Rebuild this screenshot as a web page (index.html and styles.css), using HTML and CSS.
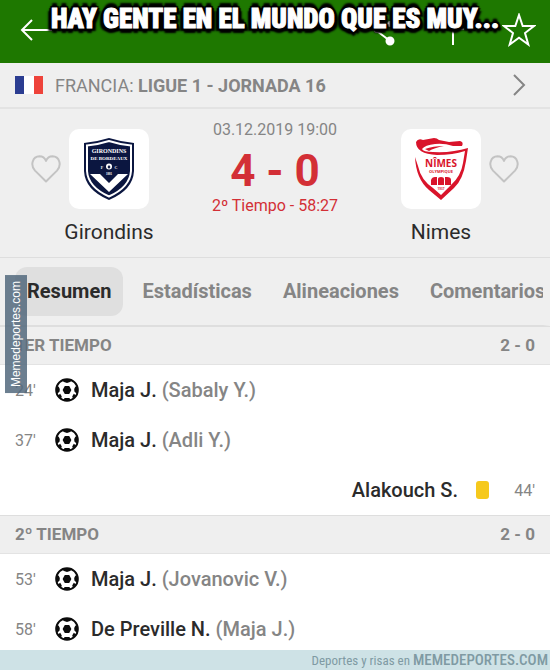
FILE: index.html
```html
<!DOCTYPE html>
<html lang="es">
<head>
  <meta charset="UTF-8">
  <meta name="viewport" content="width=device-width, initial-scale=1">
  <title>Girondins 4 - 0 Nimes</title>
  <link rel="stylesheet" href="styles.css">
</head>
<body>

<!-- Shared icons -->
<svg class="sprite" aria-hidden="true">
  <symbol id="ball" viewBox="0 0 24 24">
    <circle cx="12" cy="12" r="10.800" fill="#fff" stroke="#0b0b0b" stroke-width="2"/>
    <path fill="#0b0b0b" d="M6 2 H18 L15 4 L12 5 L9 4 Z M1 9 L3.600 8.500 L4.800 11 L4.600 13.500 L2.500 15.500 L1 14.500 Z M23 9 L20.400 8.500 L19.200 11 L19.400 13.500 L21.500 15.500 L23 14.500 Z M3 17.500 L5.200 15.800 L6.800 18.600 L6 20.500 Z M21 17.500 L18.800 15.800 L17.200 18.600 L18 20.500 Z M8.500 22.500 L9.500 20 H14.500 L15.500 22.500 Z"/>
    <path fill="#0b0b0b" d="M9.800 8 H14.200 L16.400 12 L14.200 16 H9.800 L7.600 12 Z"/>
  </symbol>
  <symbol id="heart" viewBox="0 0 30 28">
    <path fill="none" stroke="#c3c3c3" stroke-width="2" stroke-linejoin="round" d="M15 26.500 L4 15.600 C-1 10 1.500 1.500 8.500 1.300 C12 1.300 14 3.500 15 6 C16 3.500 18 1.300 21.500 1.300 C28.500 1.500 31 10 26 15.600 Z"/>
  </symbol>
</svg>

<header class="topbar">
  <button class="icon-btn" aria-label="Volver">
    <svg width="32" height="24" viewBox="0 0 32 24"><path d="M32 12 H2 M12 2 L2 12 L12 22"/></svg>
  </button>
  <div class="actions">
    <button class="icon-btn" aria-label="Compartir">
      <svg width="28" height="32" viewBox="0 0 28 32"><path d="M5 17 L18 9 M5 17 L18 27"/><circle cx="5" cy="16" r="2"/><circle cx="18" cy="10" r="2"/><circle cx="18" cy="27" r="3.500"/></svg>
    </button>
    <button class="icon-btn" aria-label="Añadir">
      <svg width="32" height="32" viewBox="0 0 32 32"><path d="M18 5 V31 M7 15 H29"/></svg>
    </button>
    <button class="icon-btn" aria-label="Favorito">
      <svg width="34" height="34" viewBox="0 0 34 34"><path d="M17 2 L20.700 13 H32 L23 20 L26.300 31.500 L17 24.700 L7.700 31.500 L11 20 L2 13 H13.300 Z"/></svg>
    </button>
  </div>
  <h1 class="caption">HAY GENTE EN EL MUNDO QUE ES MUY...</h1>
</header>

<a class="league" href="#">
  <span class="flag"></span>
  <span class="league-name">FRANCIA: <strong>LIGUE 1 - JORNADA 16</strong></span>
  <svg width="14" height="22" viewBox="0 0 14 22"><path d="M2 1 L12 11 L2 21"/></svg>
</a>

<section class="match">
  <div class="team">
    <button class="heart" aria-label="Seguir a Girondins"><svg width="30" height="28"><use href="#heart"/></svg></button>
    <div class="team-main">
      <div class="logo">
        <svg width="80" height="80" viewBox="0 0 80 80">
          <path fill="#0b1640" d="M15 14 Q27 13 40 9 Q53 13 65 14 V42 Q64 61 40 71 Q16 61 15 42 Z"/>
          <path fill="none" stroke="#fff" stroke-width="2" d="M18 16.500 Q29 15.500 40 12 Q51 15.500 62 16.500 V42 Q61 58 40 67.500 Q19 58 18 42 Z"/>
          <path fill="#fff" d="M21 45 H31 L40 54 L49 45 H59 L40 63 Z"/>
          <g fill="#fff" text-anchor="middle" font-family="Liberation Serif, serif" font-weight="bold">
            <text x="40" y="24" font-size="6">GIRONDINS</text>
            <text x="40" y="31" font-size="5">DE BORDEAUX</text>
            <text x="33" y="40" font-size="4">F</text>
            <text x="47" y="40" font-size="4">C</text>
            <text x="40" y="46" font-size="3">1881</text>
          </g>
          <circle cx="40" cy="37.500" r="3" fill="#fff"/>
          <path fill="#0b1640" d="M40 36 L41.500 38 L40.500 39.500 H39.500 L38.500 38 Z"/>
        </svg>
      </div>
      <h2>Girondins</h2>
    </div>
  </div>

  <div class="result">
    <time datetime="2019-12-03T19:00">03.12.2019 19:00</time>
    <p class="score">4 - 0</p>
    <p class="clock">2º Tiempo - 58:27</p>
  </div>

  <div class="team">
    <div class="team-main">
      <div class="logo">
        <svg width="80" height="80" viewBox="0 0 80 80">
          <g fill="#d9142b">
            <path d="M15 13 Q17 9 22 11 L33 9 Q36 9 38 11 L48 13 L59 12 Q63 13 61 17 L52 17 Q43 14 34 15 Q24 16 21 20 Q22 23 32 23 Q51 24 67 19 L65 32 Q62 51 53 59 L40 71 L28 61 Q15 50 14 28 L17 37 Q20 51 32 59 L40 66 L50 56 Q60 47 62 34 L64 22 Q52 26 36 26 Q15 25 15 13 Z"/>
            <path d="M24 20 Q32 17 43 17 Q33 19 28 22 Z"/>
            <path d="M30 56 V51 Q31 48 34 48 H36 V56 Z M37 56 V50 Q37 48 40 48 Q43 48 43 50 V56 Z M44 56 V48 H46 Q50 48 50 51 V56 Z"/>
          </g>
          <g fill="#d9142b" text-anchor="middle" font-weight="bold" font-family="Open Sans, sans-serif">
            <text x="40" y="38" font-size="10">NÎMES</text>
            <text x="40" y="44" font-size="4">OLYMPIQUE</text>
            <text x="40" y="61" font-size="3">1937</text>
          </g>
        </svg>
      </div>
      <h2>Nimes</h2>
    </div>
    <button class="heart" aria-label="Seguir a Nimes"><svg width="30" height="28"><use href="#heart"/></svg></button>
  </div>
</section>

<nav class="tabs">
  <a class="tab active" href="#">Resumen</a>
  <a class="tab" href="#">Estadísticas</a>
  <a class="tab" href="#">Alineaciones</a>
  <a class="tab" href="#">Comentarios</a>
</nav>

<main>
  <h3 class="period"><span>1ER TIEMPO</span><span>2 - 0</span></h3>
  <ul class="events">
    <li class="event"><span class="minute">24'</span><svg width="24" height="24"><use href="#ball"/></svg><span class="player">Maja J. <small>(Sabaly Y.)</small></span></li>
    <li class="event"><span class="minute">37'</span><svg width="24" height="24"><use href="#ball"/></svg><span class="player">Maja J. <small>(Adli Y.)</small></span></li>
    <li class="event away"><span class="minute">44'</span><span class="card"></span><span class="player">Alakouch S.</span></li>
  </ul>
  <h3 class="period"><span>2º TIEMPO</span><span>2 - 0</span></h3>
  <ul class="events">
    <li class="event"><span class="minute">53'</span><svg width="24" height="24"><use href="#ball"/></svg><span class="player">Maja J. <small>(Jovanovic V.)</small></span></li>
    <li class="event"><span class="minute">58'</span><svg width="24" height="24"><use href="#ball"/></svg><span class="player">De Preville N. <small>(Maja J.)</small></span></li>
  </ul>
</main>

<div class="watermark">Memedeportes.com</div>
<footer class="credit">Deportes y risas en <strong>MEMEDEPORTES.COM</strong></footer>

</body>
</html>
```
FILE: styles.css
```css
* {
  box-sizing: border-box;
}

body {
  margin: 0;
  font-family: Roboto, "Liberation Sans", sans-serif;
  color: #2b2b2b;
  background: #fff;
}

h1, h2, h3, p, ul {
  margin: 0;
  padding: 0;
}

a {
  color: inherit;
  text-decoration: none;
}

button {
  display: flex;
  padding: 0;
  border: 0;
  background: none;
}

.sprite {
  position: absolute;
  width: 0;
  height: 0;
}

/* top bar */
.topbar {
  position: relative;
  display: flex;
  justify-content: space-between;
  align-items: center;
  height: 63px;
  padding: 0 14px 4px 20px;
  background: #1e7800;
}

.actions {
  display: flex;
  align-items: center;
  gap: 35px;
}

.icon-btn svg {
  fill: none;
  stroke: #fff;
  stroke-width: 2;
}

.icon-btn circle {
  fill: #fff;
}

.caption {
  position: absolute;
  top: 0;
  left: 0;
  right: 0;
  text-align: center;
  font: 900 27px/38px "Roboto Condensed", Roboto, sans-serif;
  white-space: nowrap;
  color: #fff;
  -webkit-text-stroke: 1px #fff;
  text-shadow:
    3px 0 1px #000, -3px 0 1px #000, 0 3px 1px #000, 0 -3px 1px #000,
    2px 2px 1px #000, -2px 2px 1px #000, 2px -2px 1px #000, -2px -2px 1px #000,
    0 5px 2px #000, 0 -5px 2px #000, 4px 3px 2px #000, -4px 3px 2px #000;
}

/* league */
.league {
  display: flex;
  align-items: center;
  gap: 12px;
  height: 46px;
  padding: 0 24px 0 15px;
  border-bottom: 2px solid #e3e3e3;
  background: #efefef;
  color: #858585;
  font-size: 18px;
}

.league-name {
  flex: 1;
}

.league svg {
  fill: none;
  stroke: #858585;
  stroke-width: 2;
}

.flag {
  width: 28px;
  height: 18px;
  background: linear-gradient(90deg, #2b3d91 33%, #fff 33% 67%, #ee433b 67%);
}

/* match */
.match {
  display: flex;
  justify-content: space-between;
  padding: 10px 31px 12px;
  border-bottom: 1px solid #dedede;
  background: #efefef;
}

.team {
  display: flex;
  align-items: flex-start;
  gap: 4px;
  padding-top: 10px;
}

.heart {
  padding-top: 26px;
}

.team-main {
  display: flex;
  flex-direction: column;
  align-items: center;
  gap: 10px;
  width: 88px;
}

.logo {
  width: 80px;
  height: 80px;
  border-radius: 10px;
  background: #fff;
}

h2 {
  font-size: 21px;
  line-height: 26px;
  font-weight: normal;
}

.result {
  text-align: center;
  color: #d32f36;
}

.result time {
  display: block;
  color: #858585;
  font-size: 16px;
  line-height: 22px;
}

.score {
  padding-top: 4px;
  font-size: 44px;
  line-height: 52px;
  font-weight: bold;
}

.clock {
  font-size: 16px;
  line-height: 18px;
}

/* tabs */
.tabs {
  display: flex;
  gap: 7px;
  padding: 9px 0 9px 15px;
  border-right: 7px solid #efefef;
  border-bottom: 1px solid #dedede;
  background: #efefef;
  overflow: hidden;
}

.tab {
  flex: none;
  padding: 0 12px;
  border-radius: 12px;
  color: #858585;
  font-size: 20px;
  line-height: 49px;
  font-weight: bold;
}

.tab.active {
  background: #dfdfdf;
  color: #2b2b2b;
}

/* events */
.period {
  display: flex;
  justify-content: space-between;
  align-items: center;
  height: 39px;
  padding: 0 15px 1px;
  border-top: 1px solid #dedede;
  border-bottom: 1px solid #e3e3e3;
  background: #efefef;
  color: #858585;
  font-size: 17px;
}

.events {
  list-style: none;
}

.event {
  display: flex;
  align-items: center;
  gap: 12px;
  height: 50px;
  padding: 0 15px;
}

.event.away {
  flex-direction: row-reverse;
}

.minute {
  width: 28px;
  color: #858585;
  font-size: 16px;
}

.away .minute {
  text-align: right;
}

.player {
  font-size: 20px;
  font-weight: 500;
}

.player small {
  font-size: 20px;
  color: #858585;
}

.card {
  width: 13px;
  height: 18px;
  margin: 0 6px;
  border-radius: 3px;
  background: #f6c91c;
}

/* overlays */
.watermark {
  position: absolute;
  top: 275px;
  left: 5px;
  padding: 6px 2px;
  writing-mode: vertical-rl;
  transform: rotate(180deg);
  background: rgba(82, 104, 125, 0.85);
  color: #fff;
  font: 12px/18px "Liberation Sans", sans-serif;
}

.credit {
  position: fixed;
  left: 0;
  right: 0;
  bottom: 0;
  height: 20px;
  padding-right: 2px;
  text-align: right;
  background: #cee2e6;
  color: #7f9aa3;
  font: 13px/20px "Roboto Condensed", Roboto, sans-serif;
}

.credit strong {
  font-size: 15px;
  font-weight: 500;
}
```
